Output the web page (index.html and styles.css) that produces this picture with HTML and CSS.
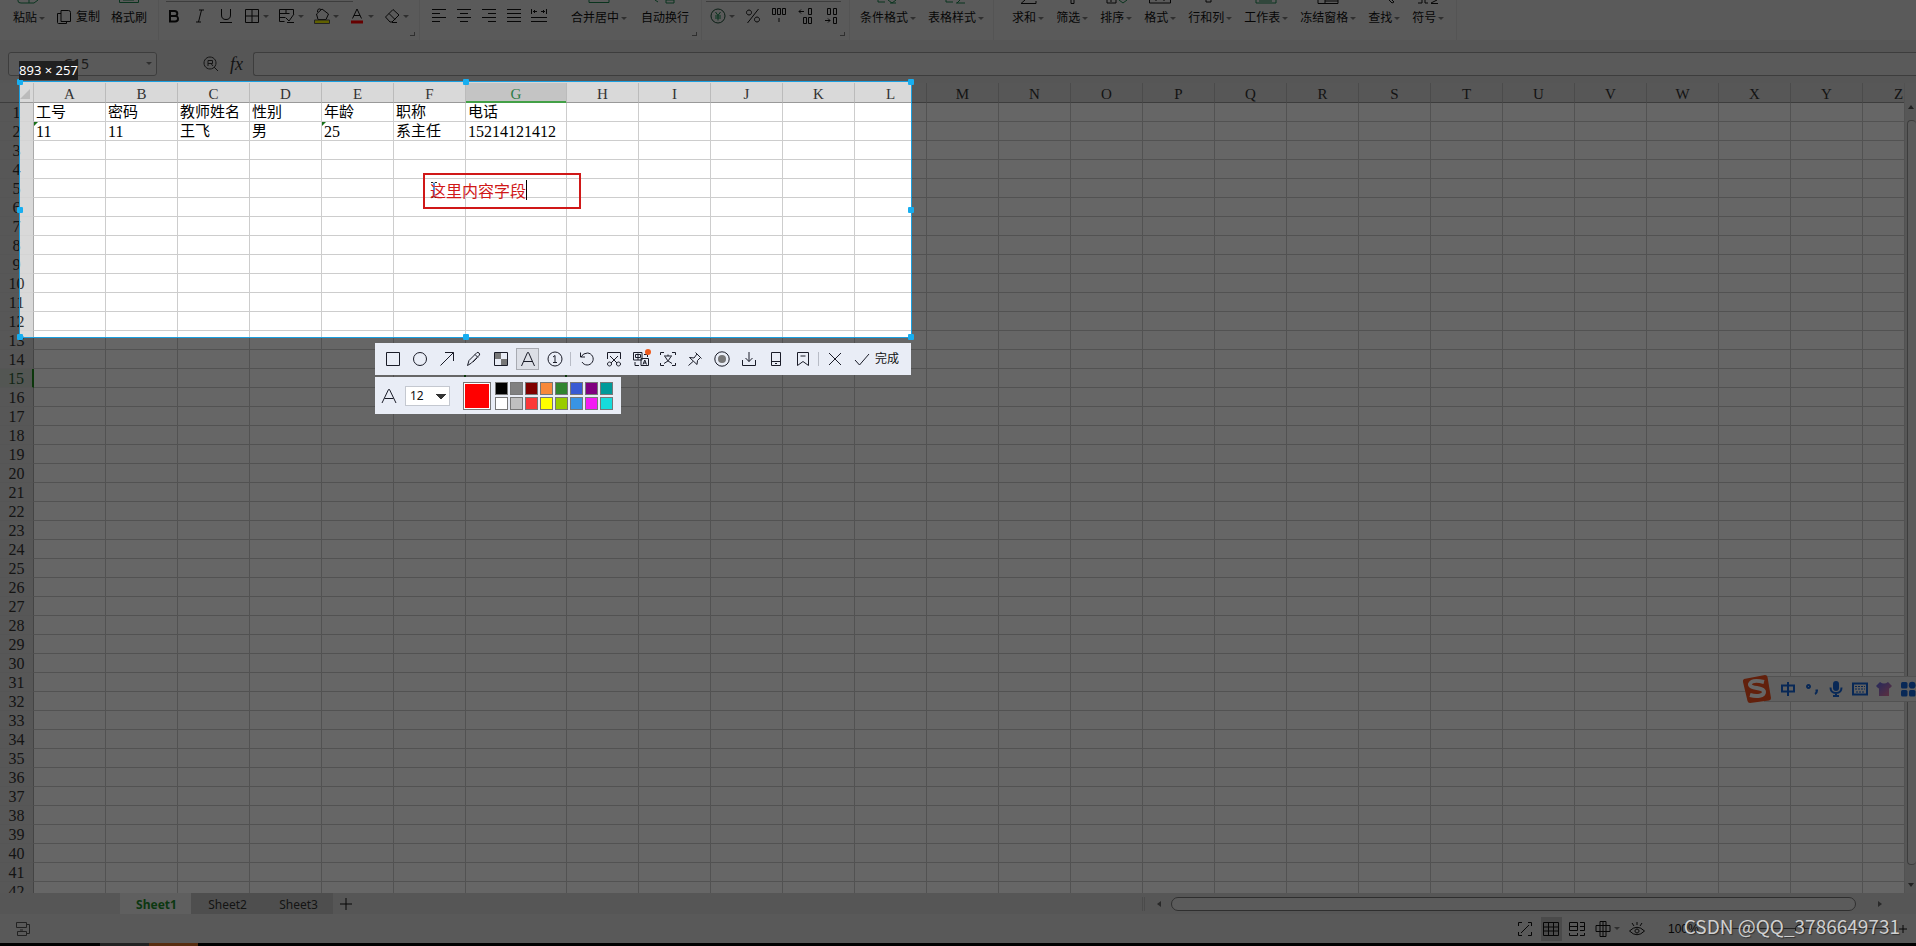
FILE: index.html
```html
<!DOCTYPE html>
<html lang="zh-CN">
<head>
<meta charset="utf-8">
<title>Sheet1</title>
<link rel="stylesheet" href="styles.css">
</head>
<body>
<header class="ribbon">
  <div class="group clip">
    <button class="tool"><svg class="cut" viewBox="0 0 24 4"><path class="g" d="M1 0v1q0 2 3 2h13l4-3M12 0v3"/></svg><span class="label drop">粘贴</span></button>
    <button class="pair"><svg class="ico" viewBox="0 0 16 16"><path d="M5 1.500h7.500q2 0 2 2v9h-9.500zM5 4.500H1.500v9q0 1 1 1h8v-2"/></svg><span>复制</span></button>
    <button class="tool"><svg class="cut" viewBox="0 0 24 4"><path class="g" d="M2.500 0v2.500h19V0M6 0h11"/></svg><span class="label">格式刷</span></button>
  </div>
  <div class="group font">
    <i class="combo"></i>
    <button aria-label="加粗"><svg class="ico" viewBox="0 0 16 16"><path class="bold" d="M4 3v10.500h5q3 0 3-2.800T9 8H4h4.500q2.800 0 2.800-2.500T8.500 3z"/></svg></button>
    <button aria-label="倾斜"><svg class="ico" viewBox="0 0 16 16"><path d="M7 2h5M4 14h5M9.500 2l-3 12"/></svg></button>
    <button aria-label="下划线"><svg class="ico" viewBox="0 0 16 16"><path d="M3.500 1v6q0 4.500 4.500 4.500T12.500 7V1M2 14.500h12"/></svg></button>
    <button class="drop" aria-label="边框"><svg class="ico" viewBox="0 0 16 16"><path d="M1.500 1.500h13v13h-13zM8 1.500v13M1.500 8h13"/></svg></button>
    <button class="drop" aria-label="绘图边框"><svg class="ico" viewBox="0 0 16 16"><path d="M14.500 6V1.500H.500v12h5M.500 5.500h10M.500 9.500h6M7 1.500v4M7 10l3 3 5-7M8 14.500h7"/></svg></button>
    <button class="drop" aria-label="填充颜色"><svg class="ico" viewBox="0 0 16 16"><path d="M2.500 6L8 1l6.500 5L12 11.500H4zM7 1.500Q3.500-.500 3.500 4"/><path class="yel" d="M.500 12h15v3.500H.500z"/></svg></button>
    <button class="drop" aria-label="字体颜色"><svg class="ico" viewBox="0 0 16 16"><path d="M3.500 10.500L8 1l4.500 9.500M5 7.500h6"/><path class="red" d="M2 12.500h12v3H2z"/></svg></button>
    <button class="drop" aria-label="清除"><svg class="ico" viewBox="0 0 16 16"><path d="M1.500 9L9 1.500l6 5.500-7 7H6zM5 5.500l6 6M8 14.500h5"/></svg></button>
    <i class="corner"></i>
  </div>
  <div class="group align">
    <button aria-label="左对齐"><svg class="ico" viewBox="0 0 16 16"><path d="M1 1.500h14M1 5.500h8M1 9.500h14M1 13.500h8"/></svg></button>
    <button aria-label="居中"><svg class="ico" viewBox="0 0 16 16"><path d="M1 1.500h14M4 5.500h8M1 9.500h14M4 13.500h8"/></svg></button>
    <button aria-label="右对齐"><svg class="ico" viewBox="0 0 16 16"><path d="M1 1.500h14M7 5.500h8M1 9.500h14M7 13.500h8"/></svg></button>
    <button aria-label="两端对齐"><svg class="ico" viewBox="0 0 16 16"><path d="M1 1.500h14M1 5.500h14M1 9.500h14M1 13.500h14"/></svg></button>
    <button aria-label="分散对齐"><svg class="ico" viewBox="0 0 16 16"><path d="M.500 1v5M15.500 1v5M2 3.500h4M10 3.500h4M4 2L2.500 3.500 4 5M12 2l1.500 1.500L12 5M0 9.500h16M0 13.500h16"/></svg></button>
    <button class="tool merge"><svg class="cut" viewBox="0 0 24 4"><path class="g" d="M2 0v2.500h20V0"/></svg><span class="label drop">合并居中</span></button>
    <button class="tool"><svg class="cut" viewBox="0 0 24 4"><path class="g" d="M2 0l3 2M13 0v3h8V0z"/></svg><span class="label">自动换行</span></button>
    <i class="corner"></i>
  </div>
  <div class="group number">
    <i class="combo"></i>
    <button class="drop" aria-label="货币"><svg class="ico" viewBox="0 0 16 16"><circle class="dk" cx="8" cy="8" r="7"/><path class="g" d="M5.500 4L8 7.500 10.500 4M8 7.500v5M5 8h6M5 10h6"/></svg></button>
    <button aria-label="百分比"><svg class="ico" viewBox="0 0 16 16"><path d="M13.500 1L2.500 15M4 2a2.500 2.500 0 1 0 .01 0zM12 9a2.500 2.500 0 1 0 .01 0z"/></svg></button>
    <button aria-label="千位分隔"><svg class="ico" viewBox="0 0 16 16"><path d="M1.500.500h3v6h-3zM6.500.500h3v6h-3zM11.500.500h3v6h-3zM8 10v4"/></svg></button>
    <button aria-label="增加小数位"><svg class="ico" viewBox="0 0 16 16"><path d="M11.500.500h3v6h-3zM6.500 9.500h3v6h-3zM11.500 9.500h3v6h-3zM2 3.500h5M4 1.500l-2 2 2 2"/></svg></button>
    <button aria-label="减少小数位"><svg class="ico" viewBox="0 0 16 16"><path d="M4.500.500h3v6h-3zM10.500.500h3v6h-3zM10.500 9.500h3v6h-3zM2 12.500h5M5 10.500l2 2-2 2"/></svg></button>
    <i class="corner"></i>
  </div>
  <div class="group style">
    <button class="tool"><svg class="cut" viewBox="0 0 24 4"><path class="g" d="M2 0v2h7M12 0l4 3 4-3M14 3h6"/></svg><span class="label drop">条件格式</span></button>
    <button class="tool"><svg class="cut" viewBox="0 0 24 4"><path class="g" d="M2 0v2h7M12 3h9M16 0l-3 3"/></svg><span class="label drop">表格样式</span></button>
  </div>
  <div class="group edit">
    <button class="tool"><svg class="cut" viewBox="0 0 24 4"><path d="M9 0L5 3.500h15V1"/></svg><span class="label drop">求和</span></button>
    <button class="tool"><svg class="cut" viewBox="0 0 24 4"><path d="M11 0v3.500h3V0"/></svg><span class="label drop">筛选</span></button>
    <button class="tool"><svg class="cut" viewBox="0 0 24 4"><path d="M3 0v3h9V0M7 0v2"/><path class="g" d="M15 0l4 3 4-3"/></svg><span class="label drop">排序</span></button>
    <button class="tool"><svg class="cut" viewBox="0 0 24 4"><path d="M1.500 0v3h21V0M8 0v1M16 0v1"/></svg><span class="label drop">格式</span></button>
    <button class="tool"><svg class="cut" viewBox="0 0 24 4"><path d="M8 0v2h5V0"/></svg><span class="label drop">行和列</span></button>
    <button class="tool"><svg class="cut" viewBox="0 0 24 4"><path class="g" d="M2 0v3h20V0M5 1h13"/></svg><span class="label drop">工作表</span></button>
    <button class="tool"><svg class="cut" viewBox="0 0 24 4"><path d="M2 0v3.500h20V0M9 0v3M9 1h13"/></svg><span class="label drop">冻结窗格</span></button>
    <button class="tool"><svg class="cut" viewBox="0 0 24 4"><path d="M17 0l3 3 2-1-2-2"/></svg><span class="label drop">查找</span></button>
    <button class="tool"><svg class="cut" viewBox="0 0 24 4"><path d="M2 3h4V0M9 0v3h3M15 3.500h7M21 0l-6 3"/></svg><span class="label drop">符号</span></button>
  </div>
</header>

<div class="formula">
  <label class="namebox drop"><input value="G15" aria-label="名称框"></label>
  <svg class="find" viewBox="0 0 16 16"><path d="M7 1a6 6 0 1 0 .01 0zM11 11l4 4M5 10V4.500h4.500v3H5M8 7.500l2 2.500"/></svg>
  <span class="fx">fx</span>
  <input class="fxinput" aria-label="编辑栏">
</div>

<main class="sheet">
  <div class="grid"><table id="cells"></table></div>
  <div class="vscroll"><i class="up"></i><i class="vthumb"></i><i class="down"></i></div>
</main>

<nav class="tabs">
  <button class="tab on">Sheet1</button><button class="tab">Sheet2</button><button class="tab">Sheet3</button>
  <button class="add" aria-label="新建工作表"><svg viewBox="0 0 14 14"><path d="M7 1v12M1 7h12"/></svg></button>
  <div class="hscroll"><i class="grip"></i><i class="arrow"></i><i class="hthumb"></i><i class="arrow right"></i></div>
</nav>

<footer class="status">
  <svg class="ico rec" viewBox="0 0 16 16"><path d="M1.500 1.500h10v5h-10zM2.500 10.500h9v4h-9zM11 3.500h3.500v9H11M5 9h3"/></svg>
  <div class="views">
    <button aria-label="全屏"><svg class="ico" viewBox="0 0 16 16"><path d="M1.500 5V1.500H5M11 1.500h3.500V5M14.500 11v3.500H11M5 14.500H1.500V11M4 12l8-8"/></svg></button>
    <button class="cur" aria-label="普通视图"><svg class="ico" viewBox="0 0 16 16"><path d="M.500 1.500h15v13H.500zM.500 6h15M.500 10h15M5.500 1.500v13M10.500 1.500v13"/></svg></button>
    <button aria-label="分页预览"><svg class="ico" viewBox="0 0 16 16"><path d="M.500 1.500h8v8h-8zM.500 5.500h8M11 1.500h4.500v8H11M11 5.500h4M.500 12v2.500h8V12M11 14.500h4.500V12"/></svg></button>
    <button class="drop" aria-label="阅读模式"><svg class="ico" viewBox="0 0 16 16"><path d="M5 .500h6v15H5zM1 4.500h14v6H1zM8 .500v15"/></svg></button>
    <button aria-label="护眼模式"><svg class="ico" viewBox="0 0 16 16"><path d="M.500 10Q8 2.500 15.500 10 8 17.500.500 10zM8 8a2 2 0 1 0 .01 0zM8 1v3M3 2l2 3M13 2l-2 3"/></svg></button>
  </div>
  <span class="zoom">100%</span>
  <input class="range" type="range" value="48" aria-label="缩放">
  <button class="plus" aria-label="放大"><svg viewBox="0 0 10 10"><path d="M5 1v8M1 5h8"/></svg></button>
</footer>
<div class="taskbar"><i class="run"></i><i class="run hot"></i></div>

<aside class="ime">
  <svg class="sogou" viewBox="0 0 30 30"><path class="tile" d="M2 5L23 1q2 0 2.500 2L29 24q0 2-2 2.500L8 29q-2 0-2.500-2L1 8q-.500-2 1-3z"/><path class="swirl" d="M22 8q-12-3-14 2c-1 5 14 3 14 8 0 4-7 5-14 3"/></svg>
  <svg viewBox="0 0 16 16"><path class="b" d="M2 4.500h12v6H2zM8 1v14"/></svg>
  <svg viewBox="0 0 16 16"><path class="b" d="M4.500 4a1.500 1.500 0 1 0 .01 0zM11.500 9.500h1.500q0 2.500-2 3.500"/></svg>
  <svg viewBox="0 0 16 16"><path class="f" d="M8 0q3 0 3 3v4q0 3-3 3T5 7V3q0-3 3-3z"/><path class="b" d="M2.500 6.500q0 5.500 5.500 5.500t5.500-5.500M8 12v3M5 15h6"/></svg>
  <svg viewBox="0 0 16 16"><path class="b" d="M1 2.500h14v11H1z"/><path class="b dots" d="M3 5.500h10M3 8h10M4 11h8"/></svg>
  <svg viewBox="0 0 16 16"><defs><linearGradient id="cloth" x1="0" y1="0" x2="1" y2="1"><stop offset="0" stop-color="#5a68e8"/><stop offset="1" stop-color="#f07898"/></linearGradient></defs><path class="shirt" d="M4 1q4 3 8 0l4 4-2.500 2.500L13 7v8H3V7l-.500.500L0 5z"/></svg>
  <svg viewBox="0 0 16 16"><rect class="f" x="1" y="1" width="6.500" height="6.500" rx="1.500"/><rect class="f" x="1" y="9" width="6.500" height="6.500" rx="1.500"/><rect class="f" x="9" y="9" width="6.500" height="6.500" rx="1.500"/><circle class="f" cx="12.200" cy="4.200" r="3.400"/></svg>
</aside>

<div class="selection">
  <i class="h nw"></i><i class="h n"></i><i class="h ne"></i><i class="h w"></i><i class="h e"></i><i class="h sw"></i><i class="h s"></i><i class="h se"></i>
  <span class="dims">893 × 257</span>
  <div class="note"><svg class="beam" viewBox="0 0 8 16"><path d="M1 .500h2l1 1 1-1h2M1 15.500h2l1-1 1 1h2"/><path class="stem" d="M4 1v14"/></svg><span>这里内容字段</span></div>
  <div class="shot">
    <div class="bar">
      <button aria-label="矩形"><svg viewBox="0 0 16 16"><path d="M1.500 1.500h13v13h-13z"/></svg></button>
      <button aria-label="椭圆"><svg viewBox="0 0 16 16"><circle cx="8" cy="8" r="6.500"/></svg></button>
      <button aria-label="箭头"><svg viewBox="0 0 16 16"><path d="M1.500 14.500l13-13M6 1.500h8.500V10"/></svg></button>
      <button aria-label="画笔"><svg viewBox="0 0 16 16"><path d="M1.500 14.500l1.500-5 8-8q1-.500 2 .500t.500 2l-8 8zM9 3.500l3 3M11 7l-4 4"/></svg></button>
      <button aria-label="马赛克"><svg viewBox="0 0 16 16"><path class="shade" d="M2 2h6v6H2zM8 8h6v6H8z"/><path d="M1.500 1.500h13v13h-13z"/></svg></button>
      <button class="on" aria-label="文字"><svg viewBox="0 0 16 16"><path d="M1.500 15L7.500 1.500h1L14.500 15M3.500 10.500h9"/></svg></button>
      <button aria-label="序号"><svg viewBox="0 0 16 16"><circle cx="8" cy="8" r="7"/><path d="M6 6l2-1.500V12M6 11.500h4"/></svg></button>
      <i class="sep"></i>
      <button aria-label="撤销"><svg viewBox="0 0 16 16"><path d="M1.500 1.500v4.500H6M2 6q2-4 6.500-4a6 6 0 1 1-5.500 9"/></svg></button>
      <button aria-label="裁剪"><svg viewBox="0 0 16 16"><path d="M1.500 8V1.500h13V8M4 5l7 7M12 5l-7 7M3.500 11a2 2 0 1 0 .01 0zM12.500 11a2 2 0 1 0 .01 0z"/></svg></button>
      <button class="new" aria-label="翻译"><svg viewBox="0 0 16 16"><path d="M9 1.500H.500V9H9zM2.500 3.500h5v3h-5zM5 2.500V9M8 7.500h7.500v7H8zM10 13.500l1.800-4.500 1.700 4.500M10.500 12h2.500M2 11v3.500h4M11 3.500h3.500V6"/></svg></button>
      <button aria-label="提取文字"><svg viewBox="0 0 16 16"><path d="M.500 4V1.500H4M12 1.500h3.500V4M15.500 12v2.500H12M4 14.500H.500V12M4 5h8M8 3.500V5M11 5.500q-2 5-7 7M5 5.500q2 5 7 7"/></svg></button>
      <button aria-label="钉住"><svg viewBox="0 0 16 16"><path d="M8.500 1.500l6 6M10 3L7 7 2.500 6.500l7.500 7 .500-4L13.500 6.500M6 10.500L1.500 14.500"/></svg></button>
      <button aria-label="录制"><svg viewBox="0 0 16 16"><circle cx="8" cy="8" r="7.200"/><circle class="shade" cx="8" cy="8" r="4"/></svg></button>
      <button aria-label="保存"><svg viewBox="0 0 16 16"><path d="M1.500 9v5.500h13V9M8 1v9.500M4.500 7L8 10.500 11.500 7"/></svg></button>
      <button aria-label="发送到手机"><svg viewBox="0 0 16 16"><path d="M3.500 1.500h9v13h-9zM3.500 10.500h9M7 12.500h2"/></svg></button>
      <button aria-label="收藏"><svg viewBox="0 0 16 16"><path d="M2.500 1.500h11v13L8 10.500l-5.500 4zM5.500 5h5"/></svg></button>
      <i class="sep"></i>
      <button aria-label="取消"><svg viewBox="0 0 16 16"><path d="M2 2l12 12M14 2L2 14"/></svg></button>
      <button class="done"><svg viewBox="0 0 16 16"><path d="M1 9l4.500 5L15 3"/></svg><span>完成</span></button>
    </div>
    <div class="bar opts">
      <svg viewBox="0 0 16 16"><path d="M1 15L7.500 1.500h1L15 15M3.500 10.500h9"/></svg>
      <select aria-label="字号"><option>12</option></select>
      <i class="picked"></i>
      <div class="swatches" id="swatches"></div>
    </div>
  </div>
</div>
<div class="watermark">CSDN @QQ_3786649731</div>
<script src="sheet.js"></script>
</body>
</html>
```
FILE: styles.css
```css
* { box-sizing: border-box; }
body {
  margin: 0; height: 100vh; overflow: hidden; position: relative;
  display: flex; flex-direction: column; background: #dedede; color: #111;
  font: 12px/16px "Liberation Sans", "Noto Sans CJK SC", sans-serif;
}
button { border: 0; padding: 0; background: none; font: inherit; color: inherit; display: flex; align-items: center; white-space: nowrap; }
svg { fill: none; stroke: #111; stroke-width: 1; display: block; overflow: visible; flex: none; }
.ico { width: 16px; height: 16px; }
.g { stroke: #17804a; }
.dk { stroke: #1a4a34; }
.bold { stroke-width: 2; }
.yel { fill: #f0f000; stroke: #555; }
.red { fill: #f00; stroke: none; }
.drop::after {
  content: ""; flex: none; margin-left: 3px; border: 3px solid transparent;
  border-top-color: #777; border-bottom-width: 0;
}

/* ribbon */
.ribbon { display: flex; flex: none; height: 40px; background: #e2e2e2; }
.group { display: flex; position: relative; padding: 0 9px 0 8px; gap: 10px; border-right: 1px solid #d3d3d3; }
.group > button { height: 32px; }
.ribbon .tool { flex-direction: column; height: 40px; justify-content: flex-start; gap: 6px; }
.cut { width: 24px; height: 4px; overflow: hidden; }
.label { display: flex; align-items: center; }
.label.drop::after { margin-left: 2px; }
.clip { padding-left: 13px; padding-right: 11px; gap: 11px; }
.pair { gap: 4px; padding-top: 2px; }
.font { padding-left: 7px; padding-right: 10px; }
.align { padding-left: 11px; gap: 9px; padding-right: 12px; }
.align .merge { margin: 0 5px 0 15px; }
.style { padding: 0 9px 0 10px; gap: 12px; }
.edit { padding: 0 12px 0 18px; gap: 12px; }
.number { padding-right: 10px; }
.combo { position: absolute; top: 1px; left: 7px; right: 66px; height: 1px; background: #999; }
.number .combo { right: 8px; left: 4px; }
.corner { position: absolute; right: 4px; bottom: 4px; width: 5px; height: 4px; border: solid #777; border-width: 0 1px 1px 0; }

/* formula bar */
.formula { flex: none; height: 43px; padding: 12px 0 8px 8px; display: flex; align-items: center; background: #d8d8d8; }
.namebox { display: flex; align-items: center; width: 149px; height: 24px; padding-right: 4px; border: 1px solid #999; border-radius: 3px; background: #e2e2e2; }
.namebox input { flex: 1; min-width: 0; border: 0; background: none; text-align: center; font: 14px "Noto Sans", sans-serif; color: #444; }
.find { width: 16px; height: 16px; margin-left: 46px; stroke: #333; }
.fx { width: 34px; padding-left: 11px; font: italic 18px/22px "Liberation Serif", serif; color: #333; }
.fxinput { flex: 1; min-width: 0; height: 24px; border: 1px solid #999; border-right: 0; border-radius: 3px 0 0 3px; background: #e2e2e2; }

/* worksheet */
.sheet { flex: 1; min-height: 0; display: flex; background: #d8d8d8; }
.grid { flex: 1; min-width: 0; overflow: hidden; }
table { table-layout: fixed; width: 1935px; border-collapse: separate; border-spacing: 0; background: #fff; }
th, td { height: 19px; padding: 0; border: solid #cdcdcd; border-width: 0 1px 1px 0; white-space: nowrap; position: relative; }
th { background: #d9d9d9; color: #333; text-align: center; }
thead th { height: 20px; padding-top: 3px; font: 15px/16px "Liberation Serif", serif; border-right-color: #bbb; border-bottom-color: #999; }
tbody th { padding-top: 2px; font: 16px/16px "Liberation Serif", serif; border-right-color: #aaa; border-bottom-color: #d4d4d4; }
td { padding: 0 0 2px 2px; font: 15px/16px "Noto Sans CJK SC", sans-serif; color: #000; }
td.num { padding: 2px 0 0 2px; font: 16px/16px "Liberation Serif", serif; }
thead .act { background: #c4c4c4; color: #2e7d46; border-bottom-color: #43a047; box-shadow: inset 0 -1px #43a047; }
tbody .act { background: #cfd8cf; color: #2e5d36; border-right: 2px solid #1e8a1e; }
.corner-cell::after { content: ""; position: absolute; right: 3px; bottom: 3px; border: 5px solid #bbb; border-top-color: transparent; border-left-color: transparent; }
.flag::before { content: ""; position: absolute; left: 0; top: 0; border: 2px solid #187018; border-right-color: transparent; border-bottom-color: transparent; }
.active::after { content: ""; position: absolute; inset: -2px -1px -1px -2px; border: 2px solid #1e8a1e; }
.vscroll { width: 12px; display: flex; flex-direction: column; align-items: center; padding: 22px 0 6px; background: #dadada; border-left: 1px solid #ccc; }
.up, .down { border: 3px solid transparent; border-bottom: 4px solid #555; border-top: 0; }
.down { border-bottom: 0; border-top: 4px solid #555; }
.vthumb { width: 9px; flex: 1; margin: 11px 0 18px; border: 1px solid #999; border-radius: 4px; background: #e4e4e4; align-self: flex-end; border-right: 0; }

/* tabs */
.tabs { flex: none; height: 21px; display: flex; align-items: stretch; padding-left: 120px; background: #d6d6d6; font: 12px/20px "Noto Sans", sans-serif; }
.tab { width: 71px; padding: 2px 0 0 2px; justify-content: center; background: #c4c4c4; color: #333; }
.tab.on { background: #eee; color: #1c8c2c; font-weight: 700; }
.add { width: 26px; justify-content: center; }
.add svg { width: 14px; height: 14px; }
.hscroll { flex: 1; display: flex; align-items: center; justify-content: flex-end; gap: 10px; padding-right: 34px; }
.grip { width: 3px; height: 14px; border: solid #bbb; border-width: 0 1px; margin-right: 2px; }
.hthumb { width: 45%; height: 14px; border: 1px solid #777; border-radius: 7px; background: #e4e4e4; margin-right: 12px; }
.arrow { border: 3px solid transparent; border-right: 4px solid #666; border-left: 0; }
.right { border-left: 4px solid #666; border-right: 0; }

/* status */
.status { flex: none; height: 29px; display: flex; align-items: center; padding: 0 8px 0 15px; background: #dfdfdf; }
.rec { stroke: #555; }
.views { margin-left: auto; display: flex; gap: 5px; }
.views button { height: 24px; padding: 0 2px; min-width: 21px; }
.views .cur { background: #b8b8b8; }
.zoom { margin-left: 20px; width: 40px; }
.range { appearance: none; width: 174px; height: 1px; margin: 0 8px; background: #555; }
.range::-webkit-slider-thumb { appearance: none; width: 10px; height: 10px; border: 1px solid #333; border-radius: 50%; background: #dfdfdf; }
.plus svg { width: 10px; height: 10px; }
.taskbar { flex: none; height: 3px; display: flex; padding-left: 100px; background: #000; }
.run { width: 49px; background: #555; }
.hot { background: #d9722a; }

/* input method bar */
.ime { position: absolute; right: 0; top: 676px; height: 26px; display: flex; align-items: center; gap: 8px; background: #f0f0f0; border: solid #ccc; border-width: 1px 0; }
.ime svg { width: 16px; height: 16px; }
.ime .sogou { width: 30px; height: 30px; margin-left: -22px; }
.tile { fill: #f4511e; stroke: none; }
.swirl { stroke: #fff; stroke-width: 4; }
.b { stroke: #1565d8; stroke-width: 2; }
.dots { stroke-dasharray: 2 1; stroke-width: 1; }
.f { fill: #1565d8; stroke: none; }
.shirt { fill: url(#cloth); stroke: none; }

/* capture layer */
.selection { position: absolute; left: 19px; top: 81px; width: 893px; height: 257px; border: 1px solid #1a9fe0; box-shadow: 0 0 0 2000px rgba(0, 0, 0, .6); }
.h { position: absolute; width: 6px; height: 6px; border-radius: 1px; background: #17aef0; }
.nw, .n, .ne { top: -3px; }
.w, .e { top: 125px; }
.sw, .s, .se { bottom: -3px; }
.nw, .w, .sw { left: -3px; }
.n, .s { left: 443px; }
.ne, .e, .se { right: -3px; }
.dims { position: absolute; left: -1px; bottom: 257px; width: 59px; background: #202020; color: #fff; font: 13px/19px "Noto Sans", sans-serif; text-align: center; white-space: nowrap; }
.note { position: absolute; left: 403px; top: 91px; width: 158px; height: 36px; padding: 0 0 2px 5px; border: 2px solid #d01818; display: flex; align-items: center; color: #d01818; font: 16px/20px "Noto Sans CJK SC", sans-serif; }
.note span { border-right: 1px solid #000; }
.beam { width: 8px; height: 16px; margin-right: -8px; stroke: #222; }
.stem { stroke: #4a9ae0; stroke-width: 2; }
.shot { position: absolute; right: 0; top: 261px; width: 536px; display: flex; flex-direction: column; align-items: flex-start; gap: 2px; }
.bar { display: flex; align-items: center; width: 100%; height: 32px; padding-left: 4px; background: #e9edf6; color: #111; }
.bar svg { width: 16px; height: 16px; stroke: #1a1c28; }
.bar button { width: 27px; height: 20px; justify-content: center; position: relative; }
.bar .on { width: 21px; margin: 0 3px; background: #dcdfe6; outline: 1px solid #a8abb2; }
.bar .shade { fill: #777; stroke: none; }
.new::after { content: ""; position: absolute; right: 3px; top: 0; width: 6px; height: 6px; border-radius: 50%; background: #ee5a1c; }
.sep { width: 1px; height: 14px; margin: 0 2px; background: #b8bcc6; }
.bar .done { width: auto; gap: 5px; padding-left: 6px; }
.opts { width: 246px; height: 37px; padding-left: 6px; }
.bar select { appearance: none; width: 45px; height: 20px; margin: 0 13px 0 8px; padding: 0 4px; border: 1px solid #c4c8d0; border-radius: 0; color: #111; font: 12px/18px "Noto Sans", sans-serif;
  background: linear-gradient(to top right, #333 50%, transparent 50%) 35px 6px / 5px 6px no-repeat, #fff;
  background: conic-gradient(from -45deg at 50% 100%, #333 90deg, transparent 0) 0 0 / 0 0 no-repeat, conic-gradient(from 135deg at 50% 0, transparent 0, transparent 0) 0 0 / 0 0 no-repeat, linear-gradient(to bottom left, #333 50%, transparent 51%) 30px 7px / 5px 5px no-repeat, linear-gradient(to bottom right, #333 50%, transparent 51%) 35px 7px / 5px 5px no-repeat, #fff; }
.picked { width: 28px; height: 28px; border: 1px solid #777; background: #f00; box-shadow: inset 0 0 0 1px #fff; }
.swatches { display: grid; grid-template-columns: repeat(8, 13px); gap: 2px; margin-left: 4px; }
.swatches i { height: 13px; border: 1px solid #777; }
.watermark { position: absolute; right: 16px; bottom: 8px; color: #d0d0d0; font: 19px/24px "Noto Sans CJK SC", sans-serif; text-shadow: 1px 1px 1px #333; }
```
FILE: sheet.js
```js
const letters = "ABCDEFGHIJKLMNOPQRSTUVWXYZ".split("");
const data = {
  1: ["工号", "密码", "教师姓名", "性别", "年龄", "职称", "电话"],
  2: ["11", "11", "王飞", "男", "25", "系主任", "15214121412"]
};
const flagged = ["A2", "E2"];
const table = document.getElementById("cells");

let html = '<colgroup><col style="width:34px">';
letters.forEach(c => { html += `<col style="width:${c === "G" ? 101 : 72}px">`; });
html += '</colgroup><thead><tr><th class="corner-cell"></th>';
letters.forEach(c => { html += `<th class="${c === "G" ? "act" : ""}">${c}</th>`; });
html += "</tr></thead><tbody>";
for (let r = 1; r <= 42; r++) {
  html += `<tr><th class="${r === 15 ? "act" : ""}">${r}</th>`;
  letters.forEach((c, i) => {
    const v = (data[r] || [])[i] || "";
    const cls = [];
    if (/^\d+$/.test(v)) cls.push("num");
    if (flagged.includes(c + r)) cls.push("flag");
    if (c + r === "G15") cls.push("active");
    html += `<td class="${cls.join(" ")}">${v}</td>`;
  });
  html += "</tr>";
}
table.innerHTML = html + "</tbody>";

const colors = ["#000", "#808080", "#800000", "#f7883a", "#308430", "#385ad3", "#800080", "#009a9a",
  "#fff", "#c0c0c0", "#fb3838", "#ffff00", "#99cc00", "#3894e4", "#f31bf3", "#16dcdc"];
document.getElementById("swatches").innerHTML =
  colors.map(c => `<i style="background:${c}"></i>`).join("");
```
